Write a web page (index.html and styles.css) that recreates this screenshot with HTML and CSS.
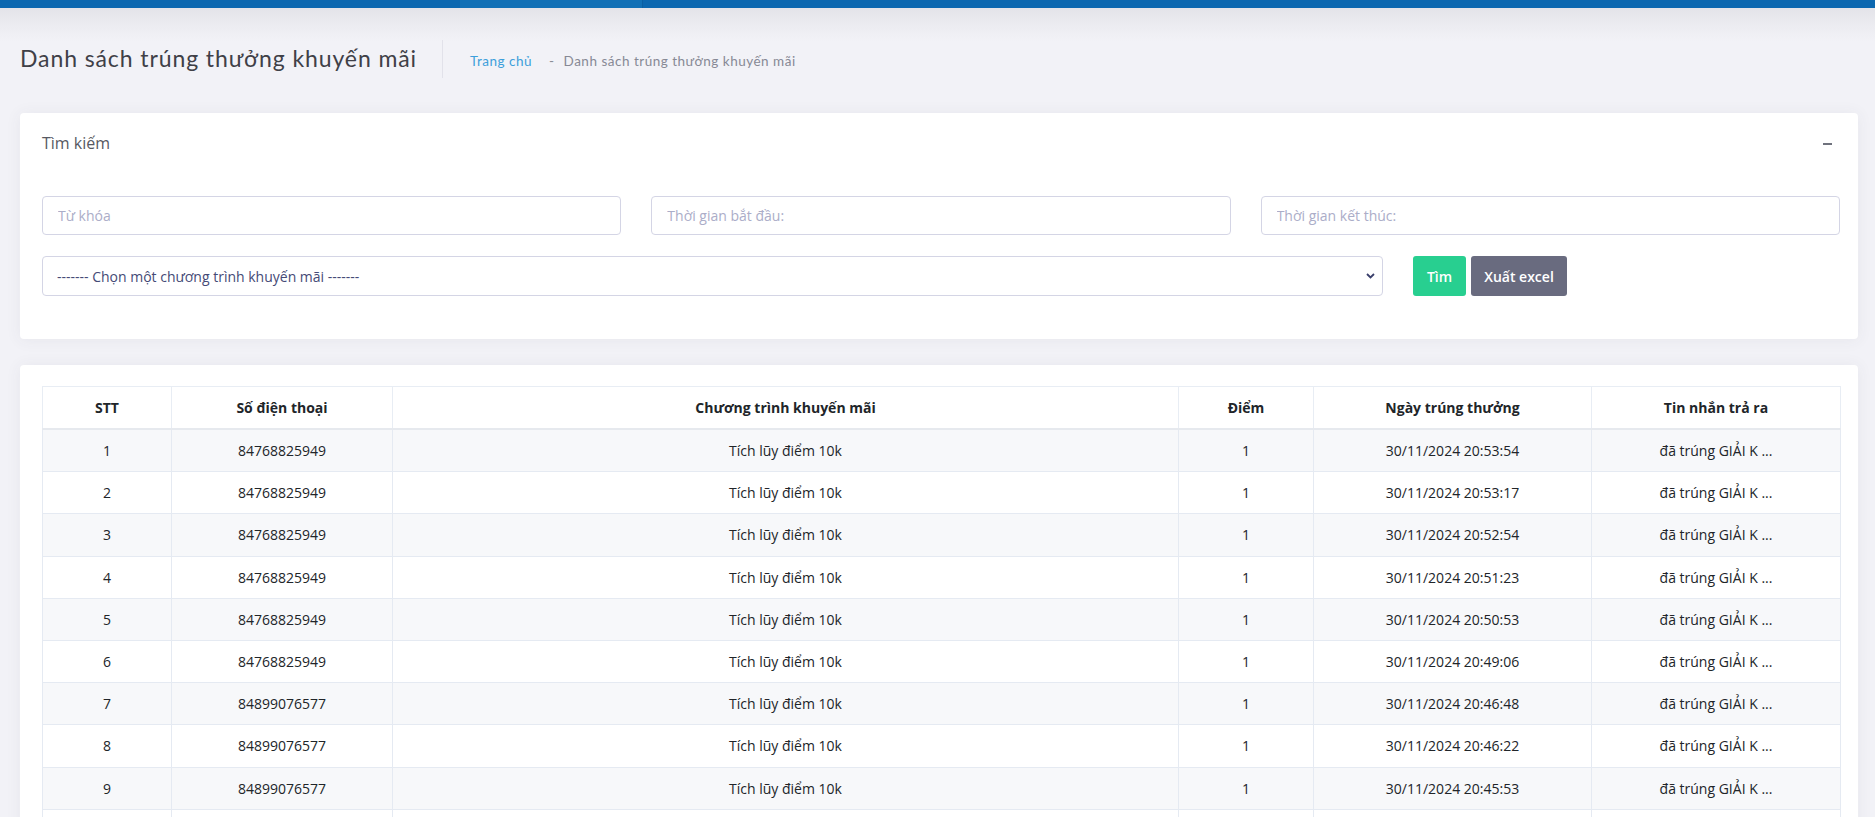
FILE: index.html
```html
<!DOCTYPE html>
<html lang="vi">
<head>
<meta charset="utf-8">
<title>Danh sách trúng thưởng khuyến mãi</title>
<link rel="stylesheet" href="styles.css">
</head>
<body>
<div class="topbar"><div class="topbar-active"></div></div>
<div class="page">
  <div class="subheader">
    <h3 class="page-title">Danh sách trúng thưởng khuyến mãi</h3>
    <div class="separator"></div>
    <div class="breadcrumb">
      <a class="crumb-home" href="#">Trang chủ</a>
      <span class="crumb-dash">-</span>
      <span class="crumb-current">Danh sách trúng thưởng khuyến mãi</span>
    </div>
  </div>

  <div class="card search-card">
    <div class="card-head">
      <span class="card-title">Tìm kiếm</span>
      <span class="collapse-btn"></span>
    </div>
    <div class="card-body">
      <div class="form-grid">
        <input class="field span-4" type="text" placeholder="Từ khóa">
        <input class="field span-4" type="text" placeholder="Thời gian bắt đầu:">
        <input class="field span-4" type="text" placeholder="Thời gian kết thúc:">
        <div class="select-wrap span-9">
          <select class="field select">
            <option>------- Chọn một chương trình khuyến mãi -------</option>
          </select>
          <svg class="chevron" width="9" height="6" viewBox="0 0 9 6"><path d="M1 1l3.5 3.5L8 1" fill="none" stroke="#3a3f6b" stroke-width="1.8"/></svg>
        </div>
        <div class="actions span-3">
          <button class="btn btn-green">Tìm</button>
          <button class="btn btn-gray">Xuất excel</button>
        </div>
      </div>
    </div>
  </div>

  <div class="card table-card">
    <table class="data-table">
      <colgroup>
        <col class="c1"><col class="c2"><col class="c3"><col class="c4"><col class="c5"><col class="c6">
      </colgroup>
      <thead>
        <tr><th>STT</th><th>Số điện thoại</th><th>Chương trình khuyến mãi</th><th>Điểm</th><th>Ngày trúng thưởng</th><th>Tin nhắn trả ra</th></tr>
      </thead>
      <tbody>
        <tr><td>1</td><td>84768825949</td><td>Tích lũy điểm 10k</td><td>1</td><td>30/11/2024 20:53:54</td><td>đã trúng GIẢI K ...</td></tr>
        <tr><td>2</td><td>84768825949</td><td>Tích lũy điểm 10k</td><td>1</td><td>30/11/2024 20:53:17</td><td>đã trúng GIẢI K ...</td></tr>
        <tr><td>3</td><td>84768825949</td><td>Tích lũy điểm 10k</td><td>1</td><td>30/11/2024 20:52:54</td><td>đã trúng GIẢI K ...</td></tr>
        <tr><td>4</td><td>84768825949</td><td>Tích lũy điểm 10k</td><td>1</td><td>30/11/2024 20:51:23</td><td>đã trúng GIẢI K ...</td></tr>
        <tr><td>5</td><td>84768825949</td><td>Tích lũy điểm 10k</td><td>1</td><td>30/11/2024 20:50:53</td><td>đã trúng GIẢI K ...</td></tr>
        <tr><td>6</td><td>84768825949</td><td>Tích lũy điểm 10k</td><td>1</td><td>30/11/2024 20:49:06</td><td>đã trúng GIẢI K ...</td></tr>
        <tr><td>7</td><td>84899076577</td><td>Tích lũy điểm 10k</td><td>1</td><td>30/11/2024 20:46:48</td><td>đã trúng GIẢI K ...</td></tr>
        <tr><td>8</td><td>84899076577</td><td>Tích lũy điểm 10k</td><td>1</td><td>30/11/2024 20:46:22</td><td>đã trúng GIẢI K ...</td></tr>
        <tr><td>9</td><td>84899076577</td><td>Tích lũy điểm 10k</td><td>1</td><td>30/11/2024 20:45:53</td><td>đã trúng GIẢI K ...</td></tr>
        <tr><td></td><td></td><td></td><td></td><td></td><td></td></tr>
      </tbody>
    </table>
  </div>
</div>
</body>
</html>
```

FILE: styles.css
```css
html, body {
  margin: 0;
  padding: 0;
  overflow: hidden;
}
body {
  background: #f2f2f7;
  font-family: "Open Sans", "Noto Sans", sans-serif;
  color: #212529;
}
.topbar {
  height: 8px;
  background: #0b67b0;
  display: flex;
}
.topbar-active {
  margin-left: 460px;
  width: 182px;
  background: #1170b6;
  border-right: 1px solid #0a5fa3;
}
.page {
  background: linear-gradient(#e3e3e9 0px, #ececf1 18px, #f2f2f7 34px, #f2f2f7 100%);
  padding: 0 17px 0 20px;
}
.subheader {
  display: flex;
  align-items: center;
  padding-top: 32px;
  height: 38px;
  margin-bottom: 35px;
}
.page-title {
  margin: 0;
  font-family: Lato, "Open Sans", sans-serif;
  font-weight: 400;
  font-size: 23px;
  letter-spacing: 0.9px;
  color: #3f4047;
  padding-right: 25px;
  position: relative;
  top: -1px;
}
.separator {
  width: 1px;
  height: 38px;
  background: #e2e2ea;
  margin-right: 27px;
}
.breadcrumb {
  font-family: Lato, "Open Sans", sans-serif;
  font-size: 13.5px;
  letter-spacing: 0.5px;
  display: flex;
  align-items: center;
  padding-top: 3px;
}
.crumb-home {
  color: #3d9fdb;
  text-decoration: none;
}
.crumb-dash {
  color: #8a8c96;
  margin: 0 9px 0 17px;
}
.crumb-current {
  color: #878995;
}
.card {
  background: #ffffff;
  border-radius: 4px;
  box-shadow: 0 1px 15px 1px rgba(69, 65, 78, 0.06);
}
.search-card {
  height: 226px;
}
.card-head {
  height: 60px;
  display: flex;
  align-items: center;
  justify-content: space-between;
  padding: 0 26px 0 22px;
}
.card-title {
  font-size: 16px;
  color: #575962;
}
.collapse-btn {
  width: 9px;
  height: 1.5px;
  background: #6f727d;
  margin-top: 2px;
}
.card-body {
  padding: 23px 18px 0 22px;
}
.form-grid {
  display: grid;
  grid-template-columns: repeat(12, 1fr);
  column-gap: 30px;
  row-gap: 21px;
}
.span-4 { grid-column: span 4; }
.span-9 { grid-column: span 9; }
.span-3 { grid-column: span 3; }
.field {
  box-sizing: border-box;
  height: 39px;
  width: 100%;
  border: 1px solid #d4d5e5;
  border-radius: 4px;
  padding: 0 15px;
  font-family: "Open Sans", sans-serif;
  font-size: 14px;
  color: #4a4e78;
  background: #fff;
  outline: none;
}
.field::placeholder {
  color: #abadc8;
}
.select-wrap {
  position: relative;
}
.select {
  height: 40px;
  appearance: none;
  -webkit-appearance: none;
  padding-left: 14px;
  color: #454a76;
}
.chevron {
  position: absolute;
  right: 8px;
  top: 17px;
}
.actions {
  display: flex;
  gap: 5px;
}
.btn {
  height: 40px;
  border: none;
  border-radius: 3px;
  color: #ffffff;
  font-family: "Open Sans", sans-serif;
  font-size: 14px;
  font-weight: 600;
  padding: 0;
}
.btn-green {
  width: 53px;
  background: #28cf90;
}
.btn-gray {
  width: 96px;
  background: #696b7f;
}
.table-card {
  margin-top: 26px;
  padding: 21px 18px 0 22px;
}
.data-table {
  width: 100%;
  border-collapse: collapse;
  table-layout: fixed;
  font-size: 14px;
  border: 1px solid #ebedf2;
}
.c1 { width: 129px; }
.c2 { width: 221px; }
.c3 { width: 786px; }
.c4 { width: 135px; }
.c5 { width: 278px; }
.c6 { width: 249px; }
.data-table th {
  height: 41px;
  padding: 0;
  font-weight: 700;
  color: #212529;
  border: 1px solid #e8edf4;
  border-bottom: 2px solid #e6e9ee;
  text-align: center;
}
.data-table td {
  height: 41.2px;
  padding: 0;
  text-align: center;
  color: #212529;
  border: 1px solid #e5eaf2;
}
.data-table tbody tr:nth-child(odd) td {
  background: #f7f8fa;
}
```
